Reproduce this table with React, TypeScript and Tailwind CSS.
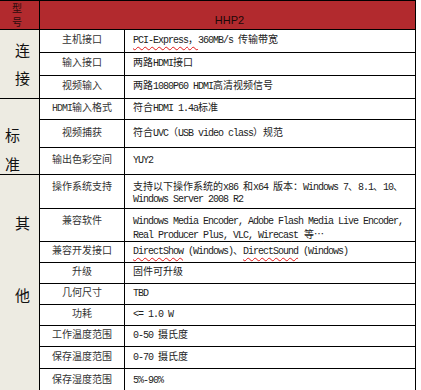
import type { ReactNode } from "react";

// narrow half-width latin runs, like the SimSun look of the sheet
function En({ children, wavy = false }: { children: ReactNode; wavy?: boolean }) {
  return (
    <span
      className={
        wavy
          ? "tracking-[-1px] underline decoration-wavy decoration-[#e01818] decoration-1 underline-offset-[3px]"
          : "tracking-[-1px]"
      }
    >
      {children}
    </span>
  );
}

interface SpecRow {
  name: ReactNode;
  value: ReactNode;
  top?: boolean;
}

const connRows: SpecRow[] = [
  {
    name: "主机接口",
    value: (
      <>
        <span className="underline decoration-wavy decoration-[#e01818] decoration-1 underline-offset-[3px]">
          <En>PCI-Express</En>，
        </span>
        <En>360MB/s </En>传输带宽
      </>
    ),
  },
  { name: "输入接口", value: <>两路<En>HDMI</En>接口</> },
  { name: "视频输入", value: <>两路<En>1080P60 HDMI</En>高清视频信号</> },
];

const stdRows: SpecRow[] = [
  { name: <><En>HDMI</En>输入格式</>, value: <>符合<En>HDMI 1.4a</En>标准</> },
  { name: "视频捕获", value: <>符合<En>UVC</En>（<En>USB video class</En>）规范</> },
  { name: "输出色彩空间", value: <En>YUY2</En> },
];

const otherRows: SpecRow[] = [
  {
    name: "操作系统支持",
    top: true,
    value: (
      <>
        支持以下操作系统的<En>x86 </En>和<En>x64 </En>版本：<En>Windows 7</En>、<En>8.1</En>、<En>10</En>、
        <br />
        <En>Windows Server 2008 R2</En>
      </>
    ),
  },
  {
    name: "兼容软件",
    top: true,
    value: (
      <>
        <En>Windows Media Encoder, Adobe Flash Media Live Encoder,</En>
        <br />
        <En>Real Producer Plus, VLC, </En>
        <En wavy>Wirecast</En> 等<span className="font-['Noto_Sans_CJK_SC',sans-serif]">…</span>
      </>
    ),
  },
  {
    name: "兼容开发接口",
    value: (
      <>
        <En wavy>DirectShow</En>
        <En> (Windows)</En>、<En wavy>DirectSound</En>
        <En> (Windows)</En>
      </>
    ),
  },
  { name: "升级", value: "固件可升级" },
  { name: "几何尺寸", value: <En>TBD</En> },
  { name: "功耗", value: <En>{"<= 1.0 W"}</En> },
  { name: "工作温度范围", value: <><En>0-50 </En>摄氏度</> },
  { name: "保存温度范围", value: <><En>0-70 </En>摄氏度</> },
  { name: "保存湿度范围", value: <En>5%-90%</En> },
];

function Cells({ row }: { row: SpecRow }) {
  return (
    <>
      <div
        className={
          row.top
            ? "flex justify-center border-r border-b border-black bg-white pt-[7px] leading-[12px] text-[#333]"
            : "flex items-center justify-center border-r border-b border-black bg-white leading-[12px] text-[#333]"
        }
      >
        {row.name}
      </div>
      <div
        className={
          row.top
            ? "border-r border-b border-black bg-white pt-[7px] pl-[8px] leading-[12px] whitespace-nowrap text-[#222]"
            : "flex items-center border-r border-b border-black bg-white pl-[8px] leading-[12px] whitespace-nowrap text-[#222]"
        }
      >
        <div>{row.value}</div>
      </div>
    </>
  );
}

export default function App() {
  return (
    <div className="h-[390px] w-[421px] overflow-hidden bg-white">
      <div className="grid w-[416px] grid-cols-[40px_85px_291px] grid-rows-[29px_23px_23px_23px_21px_28px_27px_34px_33px_21px_21px_21px_21px_21px_22px_24px] border-t border-black font-['Liberation_Mono','Noto_Sans_CJK_SC',monospace] text-[10px]">
        <div className="flex flex-col items-center justify-center border-r border-b border-black bg-[#b22a2e] pr-[5px] font-['Noto_Sans_CJK_SC',sans-serif] text-[10px] leading-[14px] text-[#2b0c0c]">
          <span>型</span>
          <span>号</span>
        </div>
        <div className="col-span-2 flex items-end justify-center border-r border-b border-black bg-[#b22a2e] pb-[3px] pl-[4px] font-['Liberation_Sans',sans-serif] text-[11px] leading-[12px] text-[#1c0808]">
          HHP2
        </div>

        <div className="row-span-3 flex flex-col justify-center border-r border-b border-black bg-[#edebe2] pl-[15px] font-['Noto_Sans_CJK_SC',sans-serif] text-[15px] leading-[28px] text-[#111]">
          <span>连</span>
          <span>接</span>
        </div>
        {connRows.map((row, i) => (
          <Cells key={"c" + i} row={row} />
        ))}

        <div className="row-span-3 flex flex-col border-r border-b border-black bg-[#edebe2] pt-[21px] pl-[5px] font-['Noto_Sans_CJK_SC',sans-serif] text-[15px] leading-[29px] text-[#111]">
          <span>标</span>
          <span>准</span>
        </div>
        {stdRows.map((row, i) => (
          <Cells key={"s" + i} row={row} />
        ))}

        <div className="row-span-9 flex flex-col gap-[56px] border-r border-b border-black bg-[#edebe2] pt-[40px] pl-[15px] font-['Noto_Sans_CJK_SC',sans-serif] text-[15px] leading-[16px] text-[#111]">
          <span>其</span>
          <span>他</span>
        </div>
        {otherRows.map((row, i) => (
          <Cells key={"o" + i} row={row} />
        ))}
      </div>
    </div>
  );
}
